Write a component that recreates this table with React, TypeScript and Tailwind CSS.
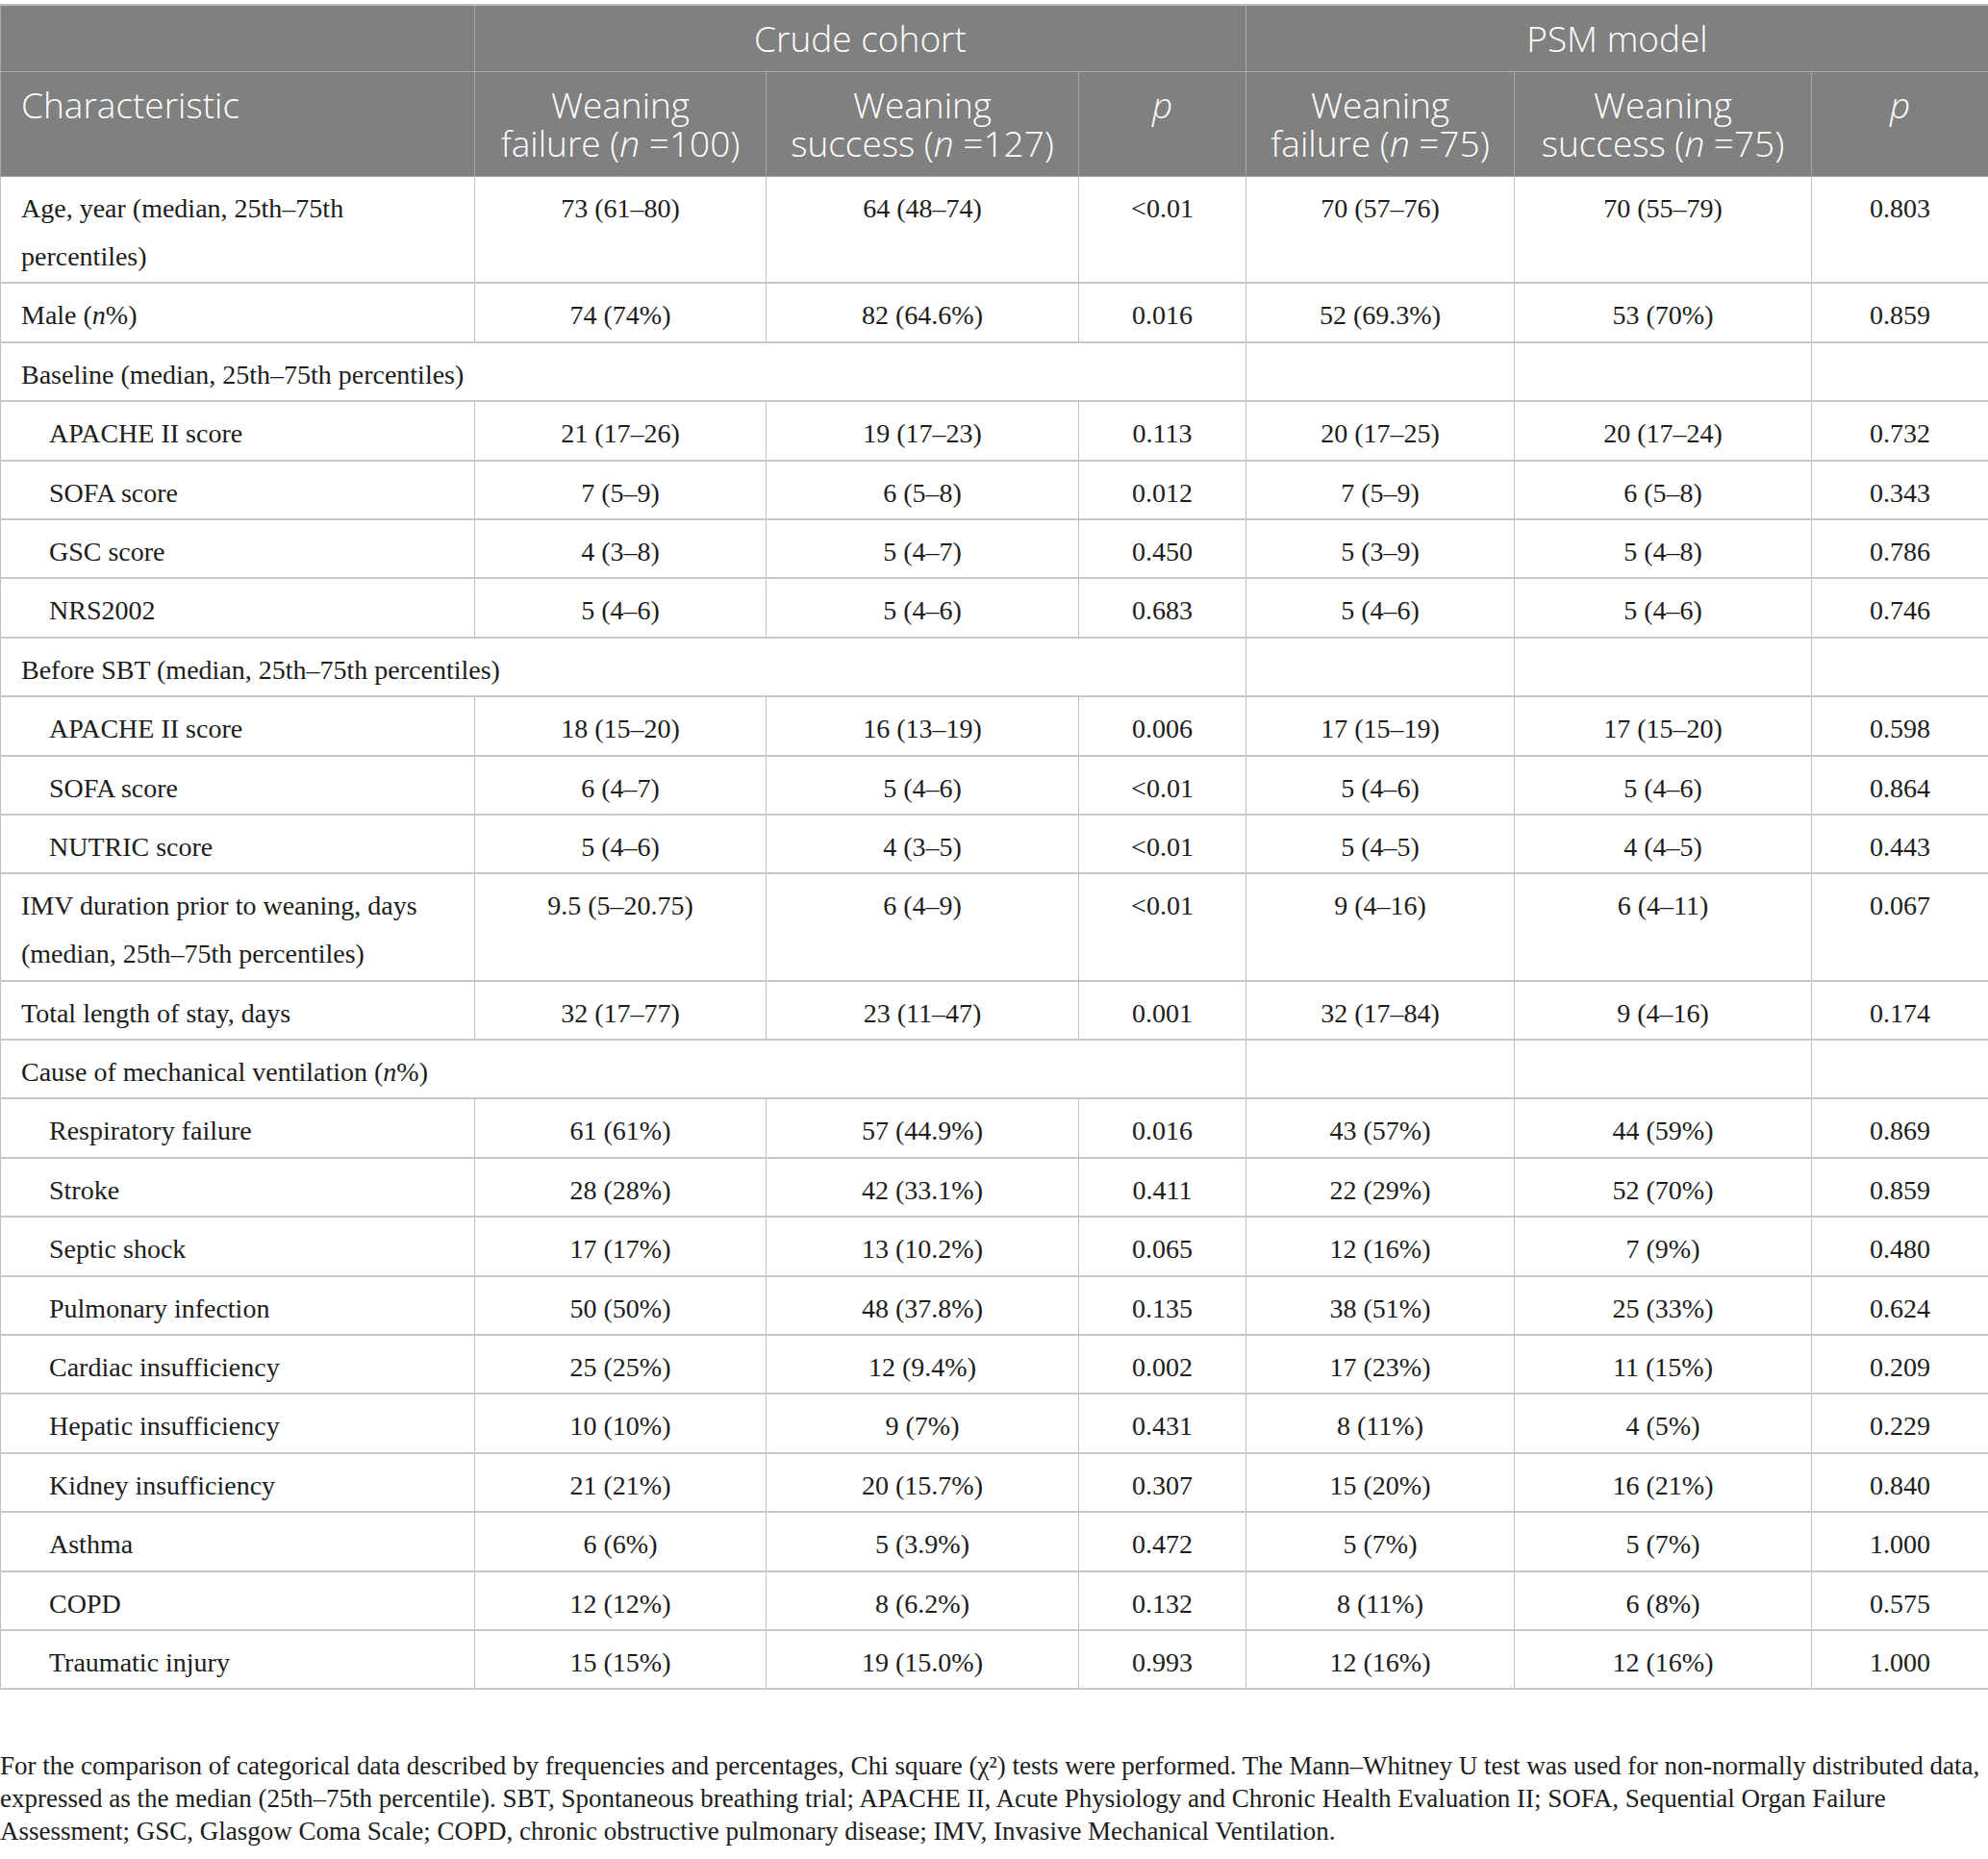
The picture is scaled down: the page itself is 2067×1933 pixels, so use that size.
import React from "react";

type Row =
  | { kind: "data"; label: React.ReactNode; indent?: boolean; v: string[] }
  | { kind: "section"; label: React.ReactNode };

const rows: Row[] = [
  { kind: "data", label: "Age, year (median, 25th–75th percentiles)", v: ["73 (61–80)", "64 (48–74)", "<0.01", "70 (57–76)", "70 (55–79)", "0.803"] },
  { kind: "data", label: <>Male (<i>n</i>%)</>, v: ["74 (74%)", "82 (64.6%)", "0.016", "52 (69.3%)", "53 (70%)", "0.859"] },
  { kind: "section", label: "Baseline (median, 25th–75th percentiles)" },
  { kind: "data", indent: true, label: "APACHE II score", v: ["21 (17–26)", "19 (17–23)", "0.113", "20 (17–25)", "20 (17–24)", "0.732"] },
  { kind: "data", indent: true, label: "SOFA score", v: ["7 (5–9)", "6 (5–8)", "0.012", "7 (5–9)", "6 (5–8)", "0.343"] },
  { kind: "data", indent: true, label: "GSC score", v: ["4 (3–8)", "5 (4–7)", "0.450", "5 (3–9)", "5 (4–8)", "0.786"] },
  { kind: "data", indent: true, label: "NRS2002", v: ["5 (4–6)", "5 (4–6)", "0.683", "5 (4–6)", "5 (4–6)", "0.746"] },
  { kind: "section", label: "Before SBT (median, 25th–75th percentiles)" },
  { kind: "data", indent: true, label: "APACHE II score", v: ["18 (15–20)", "16 (13–19)", "0.006", "17 (15–19)", "17 (15–20)", "0.598"] },
  { kind: "data", indent: true, label: "SOFA score", v: ["6 (4–7)", "5 (4–6)", "<0.01", "5 (4–6)", "5 (4–6)", "0.864"] },
  { kind: "data", indent: true, label: "NUTRIC score", v: ["5 (4–6)", "4 (3–5)", "<0.01", "5 (4–5)", "4 (4–5)", "0.443"] },
  { kind: "data", label: "IMV duration prior to weaning, days (median, 25th–75th percentiles)", v: ["9.5 (5–20.75)", "6 (4–9)", "<0.01", "9 (4–16)", "6 (4–11)", "0.067"] },
  { kind: "data", label: "Total length of stay, days", v: ["32 (17–77)", "23 (11–47)", "0.001", "32 (17–84)", "9 (4–16)", "0.174"] },
  { kind: "section", label: <>Cause of mechanical ventilation (<i>n</i>%)</> },
  { kind: "data", indent: true, label: "Respiratory failure", v: ["61 (61%)", "57 (44.9%)", "0.016", "43 (57%)", "44 (59%)", "0.869"] },
  { kind: "data", indent: true, label: "Stroke", v: ["28 (28%)", "42 (33.1%)", "0.411", "22 (29%)", "52 (70%)", "0.859"] },
  { kind: "data", indent: true, label: "Septic shock", v: ["17 (17%)", "13 (10.2%)", "0.065", "12 (16%)", "7 (9%)", "0.480"] },
  { kind: "data", indent: true, label: "Pulmonary infection", v: ["50 (50%)", "48 (37.8%)", "0.135", "38 (51%)", "25 (33%)", "0.624"] },
  { kind: "data", indent: true, label: "Cardiac insufficiency", v: ["25 (25%)", "12 (9.4%)", "0.002", "17 (23%)", "11 (15%)", "0.209"] },
  { kind: "data", indent: true, label: "Hepatic insufficiency", v: ["10 (10%)", "9 (7%)", "0.431", "8 (11%)", "4 (5%)", "0.229"] },
  { kind: "data", indent: true, label: "Kidney insufficiency", v: ["21 (21%)", "20 (15.7%)", "0.307", "15 (20%)", "16 (21%)", "0.840"] },
  { kind: "data", indent: true, label: "Asthma", v: ["6 (6%)", "5 (3.9%)", "0.472", "5 (7%)", "5 (7%)", "1.000"] },
  { kind: "data", indent: true, label: "COPD", v: ["12 (12%)", "8 (6.2%)", "0.132", "8 (11%)", "6 (8%)", "0.575"] },
  { kind: "data", indent: true, label: "Traumatic injury", v: ["15 (15%)", "19 (15.0%)", "0.993", "12 (16%)", "12 (16%)", "1.000"] },
];

const td =
  "align-top border-x border-x-[#bdbdbd] border-b-2 border-b-[#c8c8c8] pt-[8px] pb-[1.4px] leading-[50px]";
const th =
  "align-top border-x border-x-[#a7a7a7] border-b border-b-[#a7a7a7] py-[14px] leading-[40px] font-light";

export default function App() {
  return (
    <div className="w-[2067px] bg-white pt-[4px] text-[#1c1c1c]">
      <table
        className="w-[2067px] table-fixed border-collapse border-t-2 border-t-[#bdbdbd]"
        style={{ fontFamily: '"Liberation Serif", "Times New Roman", serif' }}
      >
        <colgroup>
          <col className="w-[493px]" />
          <col className="w-[303px]" />
          <col className="w-[325px]" />
          <col className="w-[174px]" />
          <col className="w-[279px]" />
          <col className="w-[309px]" />
          <col className="w-[184px]" />
        </colgroup>
        <thead
          className="bg-[#7f807f] text-white text-[37px]"
          style={{ fontFamily: '"Open Sans", "Noto Sans", sans-serif' }}
        >
          <tr>
            <th className={th}></th>
            <th colSpan={3} className={`${th} text-center`}>Crude cohort</th>
            <th colSpan={3} className={`${th} text-center`}>PSM model</th>
          </tr>
          <tr>
            <th className={`${th} text-left pl-[21px]`}>Characteristic</th>
            <th className={`${th} text-center`}>
              Weaning
              <br />
              failure (<i>n</i> =100)
            </th>
            <th className={`${th} text-center`}>
              Weaning
              <br />
              success (<i>n</i> =127)
            </th>
            <th className={`${th} text-center`}>
              <i>p</i>
            </th>
            <th className={`${th} text-center`}>
              Weaning
              <br />
              failure (<i>n</i> =75)
            </th>
            <th className={`${th} text-center`}>
              Weaning
              <br />
              success (<i>n</i> =75)
            </th>
            <th className={`${th} text-center`}>
              <i>p</i>
            </th>
          </tr>
        </thead>
        <tbody className="text-[28px]">
          {rows.map((r, i) =>
            r.kind === "section" ? (
              <tr key={i}>
                <td colSpan={4} className={`${td} pl-[21px]`}>{r.label}</td>
                <td className={td}></td>
                <td className={td}></td>
                <td className={td}></td>
              </tr>
            ) : (
              <tr key={i}>
                <td className={`${td} ${r.indent ? "pl-[50px]" : "pl-[21px]"} pr-[10px]`}>{r.label}</td>
                {r.v.map((x, j) => (
                  <td key={j} className={`${td} text-center`}>{x}</td>
                ))}
              </tr>
            )
          )}
        </tbody>
      </table>
      <p
        className="mt-[63px] whitespace-nowrap text-[27px] leading-[33.6px] text-[#1c1c1c]"
        style={{ fontFamily: '"Liberation Serif", "Times New Roman", serif' }}
      >
        For the comparison of categorical data described by frequencies and percentages, Chi square (χ²) tests were
        performed. The Mann–Whitney U test was used for non-normally distributed data,
        <br />
        expressed as the median (25th–75th percentile). SBT, Spontaneous breathing trial; APACHE II, Acute Physiology
        and Chronic Health Evaluation II; SOFA, Sequential Organ Failure
        <br />
        Assessment; GSC, Glasgow Coma Scale; COPD, chronic obstructive pulmonary disease; IMV, Invasive Mechanical
        Ventilation.
      </p>
    </div>
  );
}
